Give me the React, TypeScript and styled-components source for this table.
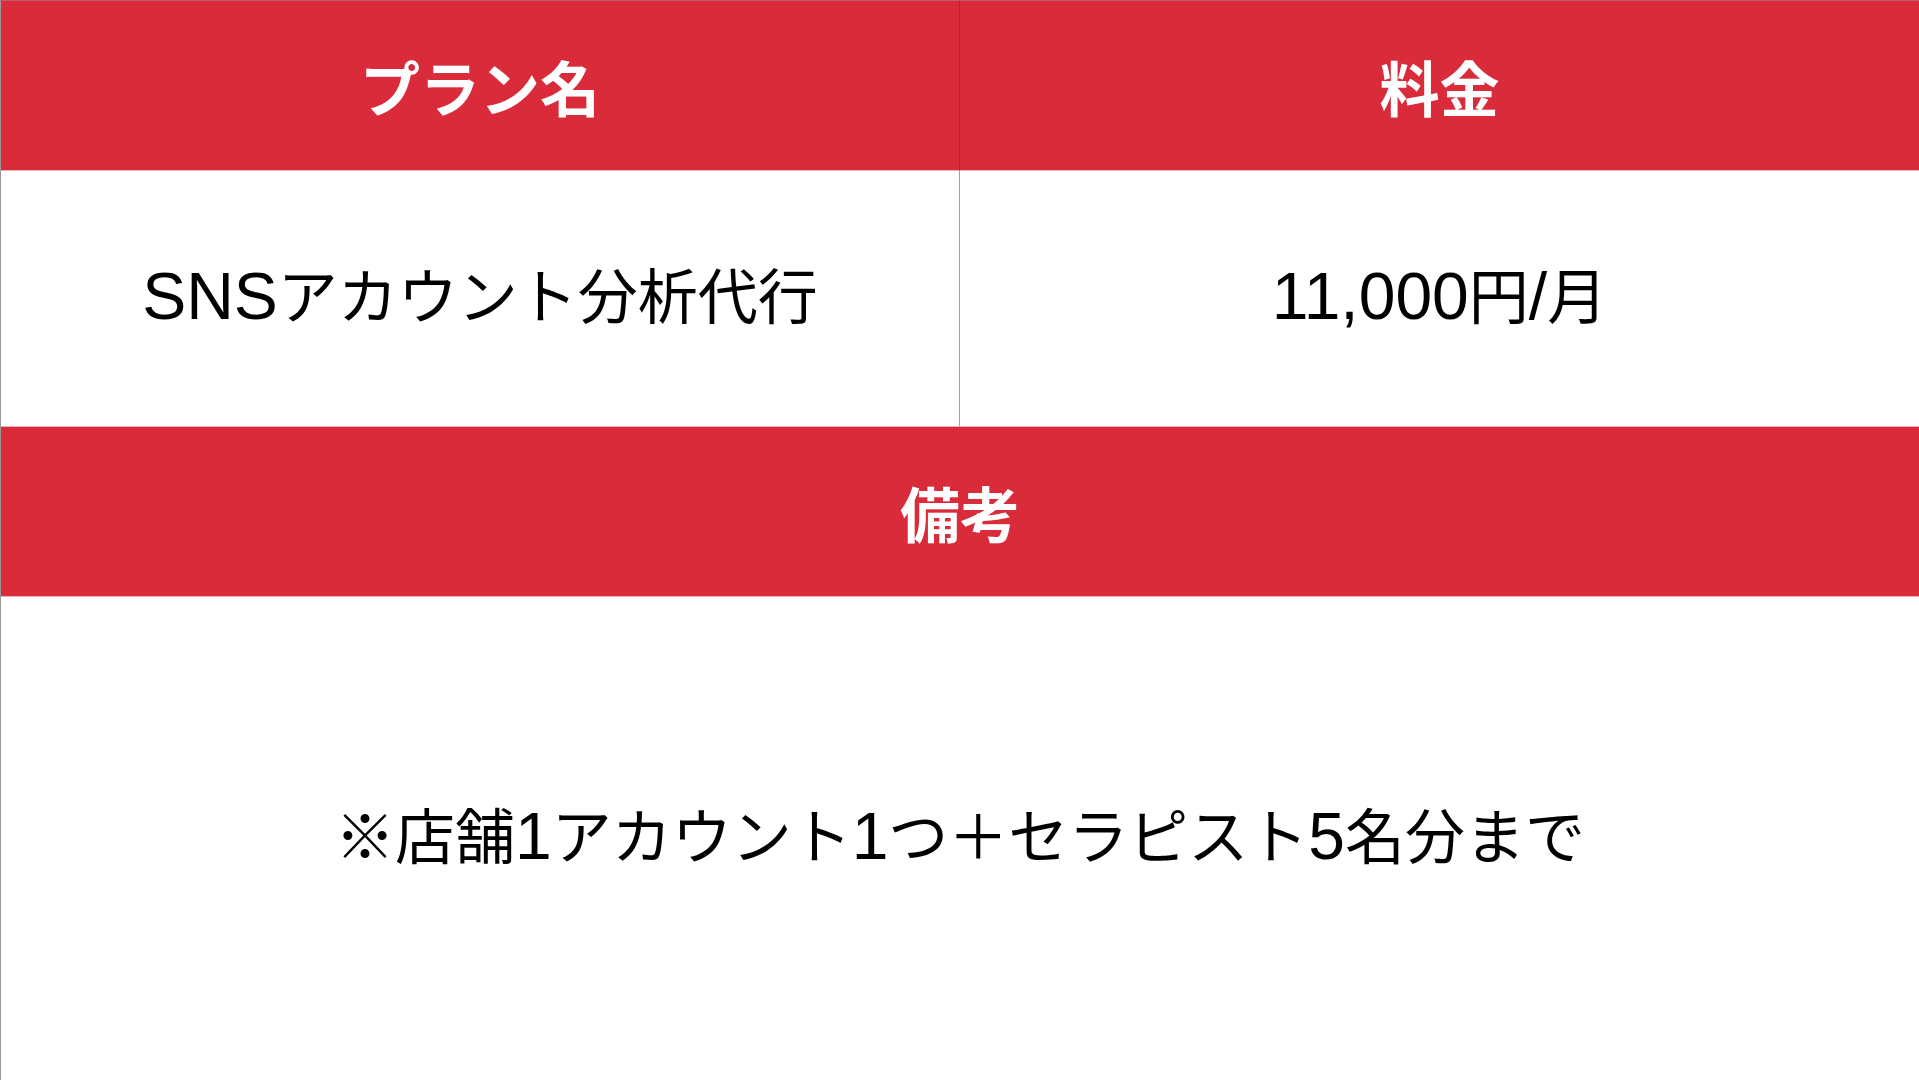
import styled, { createGlobalStyle } from 'styled-components';

const Global = createGlobalStyle`
  html, body {
    margin: 0;
    padding: 0;
    background: #ffffff;
  }
  body {
    font-family: "Liberation Sans", "Noto Sans CJK JP", sans-serif;
  }
`;

const Sheet = styled.div`
  width: 1919px;
  height: 1080px;
  display: grid;
  grid-template-columns: 959px 1fr;
  grid-template-rows: 170px 256px 170px 1fr;
  border-left: 1px solid #9a9a9a;
  border-top: 1px solid #c25a63;
  box-sizing: border-box;
  overflow: hidden;
`;

const HeadCell = styled.div<{ $wide?: boolean; $divider?: boolean }>`
  grid-column: ${({ $wide }) => ($wide ? '1 / span 2' : 'auto')};
  display: flex;
  align-items: center;
  justify-content: center;
  background: #d92b3a;
  color: #ffffff;
  font-size: 60px;
  font-weight: 700;
  border-right: ${({ $divider }) => ($divider ? '1px solid #b8222f' : 'none')};
  border-bottom: 1px solid #e9b3b8;
`;

const BodyCell = styled.div<{ $wide?: boolean; $divider?: boolean }>`
  grid-column: ${({ $wide }) => ($wide ? '1 / span 2' : 'auto')};
  display: flex;
  align-items: center;
  justify-content: center;
  background: #ffffff;
  color: #000000;
  font-size: 60px;
  font-weight: 400;
  white-space: pre;
  border-right: ${({ $divider }) => ($divider ? '1px solid #a0a0a0' : 'none')};
  border-bottom: ${({ $wide }) => ($wide ? 'none' : '1px solid #e9b3b8')};
`;

const Line = styled.span`
  line-height: 1.2;
`;

// latin letters and digits sit larger than the kana in the original deck font
const Latin = styled.span`
  font-family: "Liberation Sans", sans-serif;
  font-size: 1.1em;
  line-height: 1;
`;

export default function App() {
  return (
    <>
      <Global />
      <Sheet>
        <HeadCell $divider>プラン名</HeadCell>
        <HeadCell>料金</HeadCell>
        <BodyCell $divider>
          <Line>
            <Latin>SNS</Latin>アカウント分析代行
          </Line>
        </BodyCell>
        <BodyCell>
          <Line>
            <Latin>11,000</Latin>円<Latin>/</Latin>月
          </Line>
        </BodyCell>
        <HeadCell $wide>備考</HeadCell>
        <BodyCell $wide>
          <Line>
            ※店舗<Latin>1</Latin>アカウント<Latin>1</Latin>つ＋セラピスト<Latin>5</Latin>名分まで
          </Line>
        </BodyCell>
      </Sheet>
    </>
  );
}
